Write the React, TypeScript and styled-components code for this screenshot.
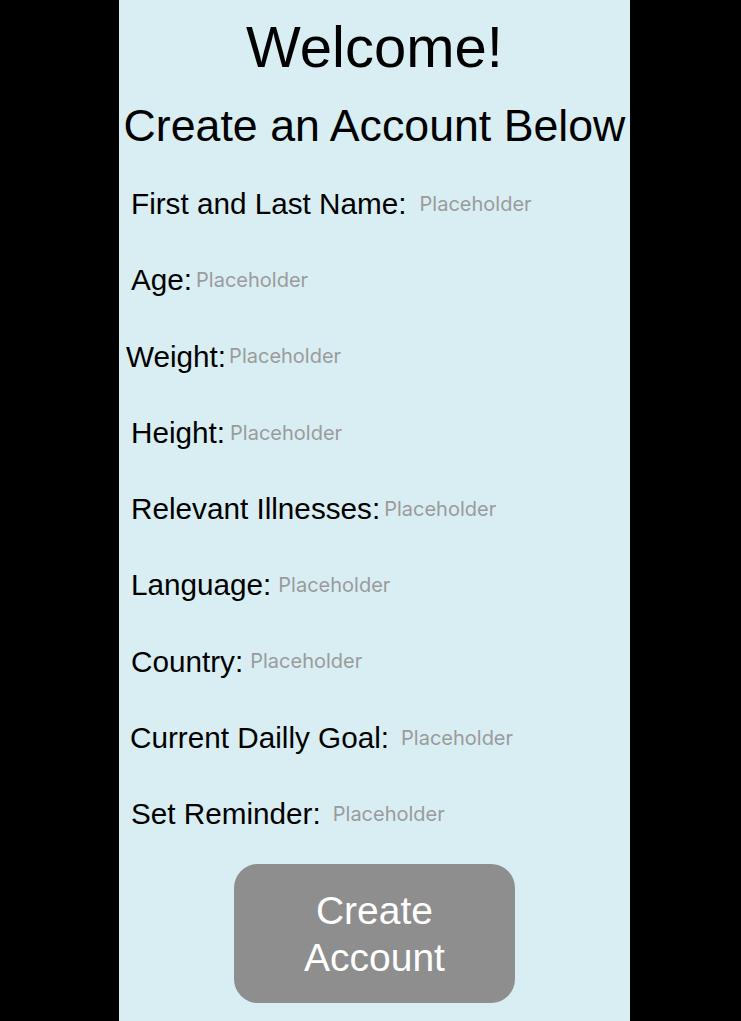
import React from "react";
import styled, { createGlobalStyle } from "styled-components";

const GlobalStyle = createGlobalStyle`
  html, body {
    margin: 0;
    padding: 0;
    background: #000000;
  }
  body {
    font-family: "Liberation Sans", Arial, sans-serif;
  }
`;

const Screen = styled.div`
  width: 741px;
  height: 1021px;
  background: #000000;
  overflow: hidden;
`;

const Panel = styled.main`
  margin-left: 119px;
  width: 511px;
  height: 1021px;
  background: #d8eef3;
  display: flex;
  flex-direction: column;
  align-items: stretch;
  box-sizing: border-box;
  padding-top: 18px;
`;

const Title = styled.h1`
  margin: 0;
  font-family: "Liberation Sans", Arial, sans-serif;
  font-weight: 400;
  font-size: 58px;
  line-height: 58px;
  color: #000000;
  text-align: center;
`;

const Subtitle = styled.h2`
  margin: 28px 0 0;
  font-family: "Liberation Sans", Arial, sans-serif;
  font-weight: 400;
  font-size: 44.7px;
  line-height: 44px;
  color: #000000;
  text-align: center;
  white-space: nowrap;
`;

const Form = styled.form`
  margin-top: 41px;
  padding-left: 12px;
  display: flex;
  flex-direction: column;
  gap: 46.75px;
`;

const Row = styled.div<{ $indent: number }>`
  display: flex;
  align-items: center;
  height: 29.5px;
  margin-left: ${(p) => p.$indent}px;
`;

const Label = styled.label<{ $gap: number }>`
  font-family: "Liberation Sans", Arial, sans-serif;
  font-size: 29.7px;
  line-height: 29.5px;
  color: #000000;
  white-space: nowrap;
  margin-right: ${(p) => p.$gap}px;
`;

const Field = styled.input`
  flex: 1;
  min-width: 0;
  border: none;
  outline: none;
  background: transparent;
  padding: 0;
  font-family: Inter, "Noto Sans", sans-serif;
  font-size: 20px;
  line-height: 24px;
  color: #000000;
  &::placeholder {
    color: #9b9b9b;
    opacity: 1;
  }
`;

const ButtonWrap = styled.div`
  margin-top: 35.5px;
  display: flex;
  justify-content: center;
`;

const CreateButton = styled.button`
  width: 281px;
  height: 139px;
  border: none;
  border-radius: 24px;
  background: #8e8e8e;
  color: #ffffff;
  font-family: "Liberation Sans", Arial, sans-serif;
  font-size: 39px;
  line-height: 47px;
  padding: 0;
  display: flex;
  align-items: center;
  justify-content: center;
  text-align: center;
`;

const fields = [
  { label: "First and Last Name:", indent: 0, gap: 13 },
  { label: "Age:", indent: 0, gap: 4 },
  { label: "Weight:", indent: -5, gap: 3 },
  { label: "Height:", indent: 0, gap: 5 },
  { label: "Relevant Illnesses:", indent: 0, gap: 4 },
  { label: "Language:", indent: 0, gap: 7 },
  { label: "Country:", indent: 0, gap: 7 },
  { label: "Current Dailly Goal:", indent: -1, gap: 12 },
  { label: "Set Reminder:", indent: 0, gap: 12 },
];

export default function App() {
  return (
    <Screen>
      <GlobalStyle />
      <Panel>
        <Title>Welcome!</Title>
        <Subtitle>Create an Account Below</Subtitle>
        <Form onSubmit={(e) => e.preventDefault()}>
          {fields.map((f, i) => (
            <Row key={f.label} $indent={f.indent}>
              <Label $gap={f.gap} htmlFor={`field-${i}`}>
                {f.label}
              </Label>
              <Field id={`field-${i}`} placeholder="Placeholder" />
            </Row>
          ))}
        </Form>
        <ButtonWrap>
          <CreateButton type="button">
            Create
            <br />
            Account
          </CreateButton>
        </ButtonWrap>
      </Panel>
    </Screen>
  );
}
